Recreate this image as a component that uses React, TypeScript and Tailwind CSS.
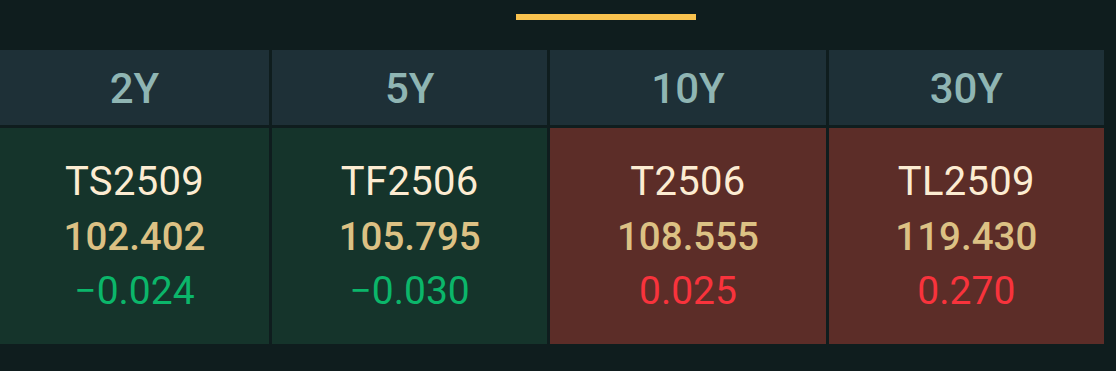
import React from "react";

const cols = [
  { h: "2Y", code: "TS2509", price: "102.402", chg: "−0.024", up: false },
  { h: "5Y", code: "TF2506", price: "105.795", chg: "−0.030", up: false },
  { h: "10Y", code: "T2506", price: "108.555", chg: "0.025", up: true },
  { h: "30Y", code: "TL2509", price: "119.430", chg: "0.270", up: true },
];

export default function App() {
  return (
    <div
      className="w-[1116px] h-[371px] bg-[#0f1d1e] overflow-hidden flex flex-col"
      style={{ fontFamily: "Roboto, 'Noto Sans', sans-serif" }}
    >
      <div className="h-[50px] flex pt-[14px] pl-[516px]">
        <div className="w-[180px] h-[6px] bg-[#f9c24e]" />
      </div>
      <div className="w-[1104px] grid grid-cols-[269px_1fr_1fr_1fr] grid-rows-[75px_216px] gap-[3px]">
        {cols.map((c) => (
          <div
            key={c.h}
            className="bg-[#1e3037] flex items-center justify-center text-[42px] font-medium text-[#8fb5b3] leading-none pt-[2px]"
          >
            {c.h}
          </div>
        ))}
        {cols.map((c) => (
          <div
            key={c.code}
            className={`${c.up ? "bg-[#5c2d28]" : "bg-[#15342b]"} flex flex-col items-center justify-center leading-[55px]`}
          >
            <div className="text-[#fcecd2] text-[40px] tracking-[0.3px]">{c.code}</div>
            <div className="text-[#dcc184] text-[38.5px] font-medium">{c.price}</div>
            <div className={`${c.up ? "text-[#f8333c]" : "text-[#0bb66a]"} text-[39px]`}>{c.chg}</div>
          </div>
        ))}
      </div>
    </div>
  );
}
